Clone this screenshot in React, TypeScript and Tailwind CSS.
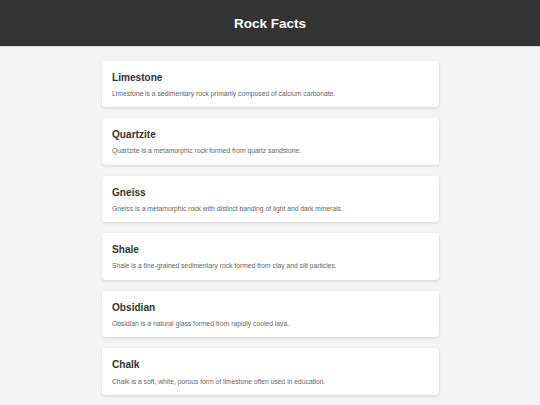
const rocks = [
  { name: "Limestone", fact: "Limestone is a sedimentary rock primarily composed of calcium carbonate." },
  { name: "Quartzite", fact: "Quartzite is a metamorphic rock formed from quartz sandstone." },
  { name: "Gneiss", fact: "Gneiss is a metamorphic rock with distinct banding of light and dark minerals." },
  { name: "Shale", fact: "Shale is a fine-grained sedimentary rock formed from clay and silt particles." },
  { name: "Obsidian", fact: "Obsidian is a natural glass formed from rapidly cooled lava." },
  { name: "Chalk", fact: "Chalk is a soft, white, porous form of limestone often used in education." },
];

export default function App() {
  return (
    <div className="min-h-screen bg-[#f4f4f4] font-['Liberation_Sans',Arial,sans-serif]">
      <header className="flex h-[47px] items-center justify-center border-b border-[#d6d6d6] bg-[#333333] pt-[2px]">
        <h1 className="text-[13.5px] font-bold text-white">Rock Facts</h1>
      </header>
      <main className="mx-auto flex w-[337px] flex-col gap-[11px] pt-[13.5px] pb-4">
        {rocks.map((rock) => (
          <article
            key={rock.name}
            className="rounded-[3px] bg-white px-[10.5px] pt-[11px] pb-[8.5px] shadow-[0_1px_3px_rgba(0,0,0,0.14)]"
          >
            <h2 className="text-[10.1px] leading-[11.6px] font-bold text-[#333333]">{rock.name}</h2>
            <p className="mt-[5.5px] text-[6.75px] leading-[10px] text-[#666666]">{rock.fact}</p>
          </article>
        ))}
      </main>
    </div>
  );
}
